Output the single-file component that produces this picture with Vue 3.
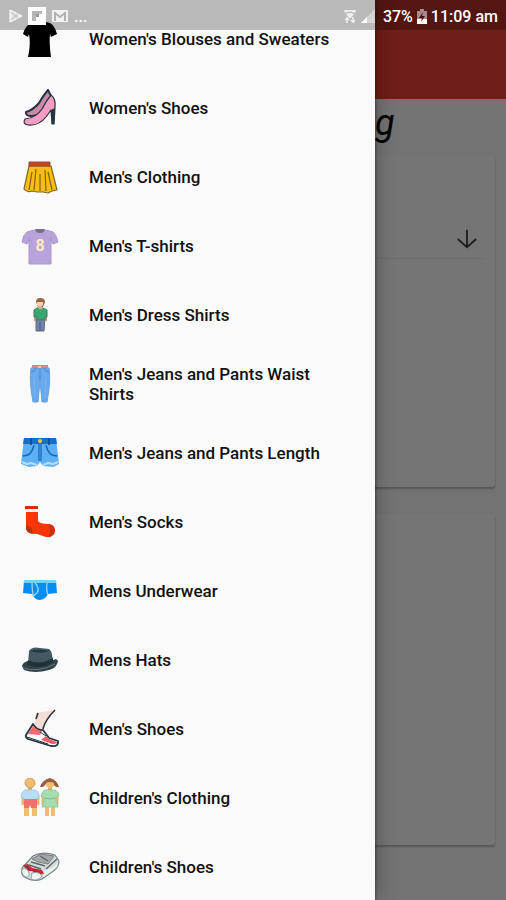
<script setup>
import { ref } from 'vue';

const ink = '#26343f';

// every icon is a list of shapes on a 40x40 canvas
const categories = ref([
  {
    name: "Women's Blouses and Sweaters",
    shapes: [
      { d: 'M11 4 L15 3 Q20 8 26 3 L30 4 Q35 7 37 15 L31 18 L30 15 Q29 24 31 38 H8 Q11 25 9 15 L8 18 L3 15 Q5 7 11 4Z', fill: '#000' },
    ],
  },
  {
    name: "Women's Shoes",
    shapes: [
      { d: 'M28 2 Q23 8 19 15 Q13 22 6 24 Q5 28 12 28 Q19 28 24 20 L31 8Z', fill: '#c98aa8', stroke: ink, width: 2 },
      { d: 'M31 7 Q26 13 22 21 Q16 30 5 31 Q2 36 8 37 Q19 38 26 29 L31 22 L32 36 H34 L35 19 Q36 11 31 7Z', fill: '#f59cc4', stroke: ink, width: 1.2 },
      { d: 'M31 22 L32 36 H34 L35 20Z', fill: ink },
    ],
  },
  {
    name: "Men's Clothing",
    shapes: [
      { d: 'M9 9 L4 32 Q7 36 12 34 L17 35 L23 35 L28 36 L32 34 L37 33 L31 9Z', fill: '#fdbd10', stroke: '#7d6a2c', width: 1.2 },
      { d: 'M9 5 H30 V9 H9Z', fill: '#d1431d', stroke: '#8d4a38', width: 1 },
      { d: 'M12 15 L9 33 M16 12 L14 33 M20 17 V34 M25 13 L26 34 M28 15 L32 33', stroke: '#7c611a', width: 1.2 },
    ],
  },
  {
    name: "Men's T-shirts",
    mark: '8',
    shapes: [
      { d: 'M14 4 L7 6 Q3 9 2 16 L7 18 L9 15 V38 H31 V15 L33 18 L38 16 Q36 8 33 6 L26 4 Q20 9 14 4Z', fill: '#b9a3dc', stroke: '#a898c4', width: 1 },
      { d: 'M15 3 H25 L24 6 Q20 8 16 6Z', fill: '#77728c' },
      { d: 'M9 15 V11 M31 15 V11', stroke: '#9c88be', width: 1 },
    ],
  },
  {
    name: "Men's Dress Shirts",
    shapes: [
      { d: 'M16 23 H25 L24 36 H16Z', fill: '#7184ad', stroke: '#626b82', width: 1 },
      { d: 'M20 27 V36', stroke: '#4d5674', width: 1 },
      { d: 'M15 18 L15 26 M26 18 L26 26', stroke: '#c29882', width: 2 },
      { d: 'M17 13 L14 15 L14 22 H17 V25 H25 V22 H27 V15 L23 13Z', fill: '#38a873', stroke: '#47745f', width: 1 },
      { d: 'M18 10 H23 V13 Q20 16 18 13Z', fill: '#dba987' },
      { d: 'M16 7 Q16 3 20 3 Q25 3 25 7 L23 12 H18Z', fill: '#986442' },
      { d: 'M17 7 H23 V10 Q20 14 17 10Z', fill: '#f5cdb2' },
    ],
  },
  {
    name: "Men's Jeans and Pants Waist Shirts",
    shapes: [
      { d: 'M11 4 H29 Q31 17 27 38 H22 L20 17 L18 38 H13 Q9 18 11 4Z', fill: '#69a9ed', stroke: '#68a0dc', width: 1 },
      { d: 'M12 1 H28 V4 H12Z', fill: '#d78491' },
      { d: 'M18 2 H21 V4 H18Z', fill: '#f5d270' },
      { d: 'M11 8 Q15 8 16 4 M29 8 Q25 8 24 4 M20 4 V16', stroke: '#4f89c6', width: 1 },
      { d: 'M14 14 L15 33 M26 14 L25 33', stroke: '#7cb6f2', width: 1 },
    ],
  },
  {
    name: "Men's Jeans and Pants Length",
    shapes: [
      { d: 'M4 5 H36 L39 31 L33 34 L23 33 L20 29 L17 33 L9 34 L1 31Z', fill: '#5eb0f5' },
      { d: 'M4 5 H36 L37 11 H3Z', fill: '#176ec2' },
      { d: 'M11 5 V12 M29 5 V12', stroke: '#1554a2', width: 2 },
      { d: 'M20 11 V28', stroke: '#2f83cf', width: 4 },
      { d: 'M3 23 Q12 23 14 12 M37 23 Q28 23 26 12', stroke: '#1768b5', width: 1.5 },
      { d: 'M2 29 L7 31 L11 30 L17 32 M23 32 L28 30 L33 31 L38 29', stroke: '#b8dfff', width: 2 },
      { d: 'M18 8 A2 2 0 1 0 22 8 A2 2 0 1 0 18 8Z', fill: '#ffc733' },
    ],
  },
  {
    name: "Men's Socks",
    shapes: [
      { d: 'M6 9 H18 V19 Q20 22 28 22 Q35 23 35 29 Q34 36 26 35 L17 32 Q7 32 6 27Z', fill: '#fb3505' },
      { d: 'M5 4 H18 V7 H5Z', fill: '#cf2e1b' },
      { d: 'M5 7 H18 V10 H5Z', fill: '#fff4ef' },
      { d: 'M6 23 Q13 24 13 32 Q6 31 6 26Z', fill: '#b73313' },
      { d: 'M29 22 Q35 23 35 29 Q34 34 28 35 Q31 28 29 22Z', fill: '#c93310' },
    ],
  },
  {
    name: 'Mens Underwear',
    shapes: [
      { d: 'M4 10 H36 L37 22 L28 23 Q26 28 20 29 Q15 29 12 23 L3 22Z', fill: '#078df2' },
      { d: 'M4 9 H36 V12 H4Z', fill: '#78cffc' },
      { d: 'M12 12 Q12 19 13 24 M27 12 Q26 19 28 24 M15 12 Q20 17 17 22 L13 25', stroke: '#a0dcfb', width: 1.2 },
    ],
  },
  {
    name: 'Mens Hats',
    shapes: [
      { d: 'M2 26 Q3 22 8 21 L33 20 Q37 18 38 21 Q37 28 29 30 Q15 34 4 30Z', fill: '#33434b' },
      { d: 'M8 24 L9 11 Q12 6 20 8 L29 9 Q32 10 33 22 Q23 29 8 24Z', fill: '#435962' },
      { d: 'M8 20 Q19 26 33 18 L33 22 Q24 30 7 25Z', fill: '#243038' },
      { d: 'M10 11 Q18 8 29 11 Q23 14 14 12Z', fill: '#27373f' },
      { d: 'M3 28 Q18 33 35 24', stroke: '#66767d', width: 1 },
    ],
  },
  {
    name: "Men's Shoes",
    shapes: [
      { d: 'M16 4 L14 21 L22 22 Q24 12 35 1Z', fill: '#f4ddd5' },
      { d: 'M18 4 L16 10 M35 1 Q25 11 23 20', stroke: '#28333c', width: 1.6 },
      { d: 'M13 15 L6 26 Q5 28 8 30 L31 37 Q39 38 38 32 L29 29 L23 21 Q17 22 13 15Z', fill: '#fff', stroke: ink, width: 1.8 },
      { d: 'M13 17 L8 25 L20 26 L22 22 Q16 21 13 17Z', fill: '#f66871' },
      { d: 'M26 27 L21 31 L32 35 Q37 35 37 33 L29 30Z', fill: '#f65c68' },
      { d: 'M20 23 L26 27 M7 28 L28 35', stroke: '#26343f', width: 1 },
    ],
  },
  {
    name: "Children's Clothing",
    shapes: [
      { d: 'M3 17 V27 M18 17 V27 M23 17 V27 M37 17 V27', stroke: '#e9b66c', width: 3 },
      { d: 'M4 27 H9 V38 H4Z M12 27 H17 V38 H12Z M25 27 H29 V38 H25Z M31 27 H35 V38 H31Z', fill: '#edbd76' },
      { d: 'M8 9 H12 V14 H8Z M28 9 H32 V14 H28Z', fill: '#e1a75e' },
      { d: 'M5 5 A5 5 0 1 0 15 5 A5 5 0 1 0 5 5Z', fill: '#efbd70', stroke: '#d79e5e', width: 1 },
      { d: 'M5 12 H15 Q19 13 19 19 L17 20 V22 H4 V20 L1 19 Q1 14 5 12Z', fill: '#b8dff9', stroke: '#a4cbe2', width: 1 },
      { d: 'M4 21 H17 V30 H11 L10 27 L9 30 H4Z', fill: '#f06f6f' },
      { d: 'M20 9 Q22 2 30 0 Q37 2 39 9 L36 9 L33 6 H26 L23 9Z', fill: '#98603f' },
      { d: 'M26 5 Q30 3 34 5 V8 Q30 12 26 8Z', fill: '#efbd70' },
      { d: 'M25 12 H35 Q39 14 39 18 L35 20 L38 29 H22 L25 20 L21 18 Q22 13 25 12Z', fill: '#a6ddb0', stroke: '#93cc9d', width: 1 },
      { d: 'M25 20 Q30 22 35 20', stroke: '#79b787', width: 1 },
    ],
  },
  {
    name: "Children's Shoes",
    shapes: [
      { d: 'M2 21 L13 9 Q22 4 35 8 L39 14 Q39 21 32 25 L22 32 Q13 36 3 29 Q1 26 2 21Z', fill: '#d3dddd', stroke: '#7a8486', width: 1.2 },
      { d: 'M12 12 L21 7 L34 9 L28 17 L18 15Z', fill: '#a3a8aa', stroke: '#777d80', width: 1 },
      { d: 'M26 22 L37 12 M11 15 L25 19 M9 18 L21 22 M20 9 L28 14', stroke: '#5d6568', width: 1.4 },
      { d: 'M28 22 Q35 21 38 14 L37 20 L24 30 L22 26Z', fill: '#e9f1ef' },
      { d: 'M3 18 L8 17 L12 21 L22 23 L24 27 L17 28 L12 24 L7 24Z', fill: '#cf2635' },
      { d: 'M6 19 L10 23 M14 22 L18 26', stroke: '#722a36', width: 1 },
      { d: 'M2 22 Q7 20 9 26 Q10 30 6 30 Q1 28 2 22Z M12 26 Q19 24 22 29 Q17 35 11 32Z', fill: '#edf6f3', stroke: '#98a4a4', width: 1 },
    ],
  },
]);
</script>

<template>
  <div class="screen">
    <main class="page">
      <header class="app-bar"></header>
      <h1 class="title">g</h1>
      <section class="card">
        <div class="card-head">
          <button class="sort" aria-label="Sort">
            <svg viewBox="0 0 24 24"><path d="M12 2 V21 M2 12 L12 21 L22 12" /></svg>
          </button>
        </div>
      </section>
      <section class="card"></section>
    </main>

    <div class="scrim"></div>

    <nav class="drawer">
      <ul>
        <li v-for="category in categories" :key="category.name">
          <a href="#" class="item" @click.prevent>
            <svg class="icon" viewBox="0 0 40 40" aria-hidden="true">
              <path
                v-for="(shape, i) in category.shapes"
                :key="i"
                :d="shape.d"
                :fill="shape.fill || 'none'"
                :stroke="shape.stroke || 'none'"
                :stroke-width="shape.width"
                stroke-linejoin="round"
              />
              <text v-if="category.mark" class="mark" x="20" y="25">{{ category.mark }}</text>
            </svg>
            <span class="label">{{ category.name }}</span>
          </a>
        </li>
      </ul>
    </nav>

    <div class="status-bar">
      <div class="status-group">
        <svg class="play" viewBox="0 0 14 16">
          <path d="M1 2 L13 8 L1 14Z" fill="#e5e5e5" stroke="#fff" stroke-linejoin="round" />
          <path d="M2 4 L9 10 M2 12 L9 6" stroke="#b5b5b5" fill="none" />
        </svg>
        <svg class="flip" viewBox="0 0 18 18">
          <path d="M0 0 H18 V18 H0Z" fill="#fff" />
          <path d="M4 4 H14 V7 H11 V10 H8 V14 H4Z" fill="#b7b7b7" />
          <path d="M8 7 H11 V10 H8Z" fill="#989898" />
        </svg>
        <svg class="mail" viewBox="0 0 16 12">
          <rect width="16" height="12" rx="1" fill="#f3f3f3" />
          <path d="M3 11 V3 L8 7 L13 3 V11" stroke="#b1b1b1" stroke-width="2" fill="none" />
        </svg>
        <span class="dots">...</span>
      </div>
      <div class="status-group">
        <svg class="wifi" viewBox="0 0 14 14">
          <path d="M1 1 H13 L12 4 Q7 1 2 4Z M3 5 Q7 3 11 5 L8 9 H6Z" fill="#eee" />
          <path d="M4 14 V9 L2 11 M4 9 L6 11 M10 8 V13 L8 11 M10 13 L12 11" stroke="#eee" stroke-width="1.5" fill="none" />
        </svg>
        <svg class="signal" viewBox="0 0 14 14">
          <path d="M0 14 L14 0 V14Z" fill="#d5d5d5" />
          <path d="M0 14 L6 8 V14Z" fill="#fff" />
        </svg>
        <span class="percent">37%</span>
        <svg class="battery" viewBox="0 0 10 15">
          <path d="M3 0 H7 V2 H10 V15 H0 V2 H3Z" fill="#a58a87" />
          <path d="M0 10 H10 V15 H0Z" fill="#fff" />
          <path d="M6 3 L2 9 H5 L4 13 L8 7 H5Z" fill="#3d1512" />
        </svg>
        <span class="clock">11:09 am</span>
      </div>
    </div>
  </div>
</template>

<style>
body {
  margin: 0;
  background: #fafafa;
}
</style>

<style scoped>
.screen {
  position: relative;
  height: 100vh;
  overflow: hidden;
  font-family: Roboto, 'Liberation Sans', sans-serif;
  background: #fafafa;
}

.page {
  display: flex;
  flex-direction: column;
  height: 100%;
}

.app-bar {
  flex: none;
  height: 99px;
  background: #f44336;
}

.title {
  flex: none;
  margin: 0;
  padding-right: 22%;
  text-align: right;
  font-size: 36px;
  line-height: 48px;
  height: 56px;
  font-style: italic;
  font-weight: 400;
  color: #000;
}

.card {
  flex: 1;
  margin: 0 11px 27px;
  background: #fff;
  border-radius: 3px;
  box-shadow: 0 2px 2px rgba(0, 0, 0, 0.25);
}

.card:last-child {
  margin-bottom: 55px;
}

.card-head {
  display: flex;
  justify-content: flex-end;
  align-items: flex-end;
  height: 103px;
  margin: 0 11px;
  border-bottom: 1px solid #f0f0f0;
}

.sort {
  margin: 0 6px 8px;
  padding: 0;
  border: 0;
  background: none;
}

.sort svg {
  display: block;
  width: 22px;
  height: 22px;
  fill: none;
  stroke: #444;
  stroke-width: 2;
}

.scrim {
  position: absolute;
  inset: 0;
  background: rgba(0, 0, 0, 0.54);
}

.drawer {
  position: absolute;
  top: 0;
  bottom: 0;
  left: 0;
  width: 375px;
  max-width: 80%;
  padding-top: 4px;
  box-sizing: border-box;
  overflow: hidden;
  background: #fafafa;
  box-shadow: 0 0 3px rgba(0, 0, 0, 0.6), 0 0 20px rgba(0, 0, 0, 0.3);
}

ul {
  list-style: none;
  margin: 0;
  padding: 0;
}

.item {
  display: flex;
  align-items: center;
  gap: 29px;
  height: 69px;
  padding: 0 32px 0 20px;
  color: #111;
  text-decoration: none;
}

.icon {
  flex: none;
  width: 40px;
  height: 40px;
}

.mark {
  font-size: 16px;
  font-weight: 700;
  text-anchor: middle;
  fill: #fbebc0;
}

.label {
  font-size: 17px;
  line-height: 20px;
  font-weight: 500;
}

.status-bar {
  position: absolute;
  top: 0;
  left: 0;
  right: 0;
  display: flex;
  justify-content: space-between;
  height: 30px;
  padding: 2px 8px 0;
  box-sizing: border-box;
  background: rgba(0, 0, 0, 0.26);
  color: #fff;
  font-size: 16px;
  font-weight: 500;
}

.status-group {
  display: flex;
  align-items: center;
  gap: 4px;
}

.play {
  width: 16px;
  height: 16px;
}

.flip {
  width: 18px;
  height: 18px;
}

.mail {
  width: 16px;
  height: 12px;
  margin: 0 2px;
}

.wifi,
.signal {
  width: 14px;
  height: 14px;
}

.signal {
  margin-right: 4px;
}

.battery {
  width: 10px;
  height: 15px;
}
</style>
